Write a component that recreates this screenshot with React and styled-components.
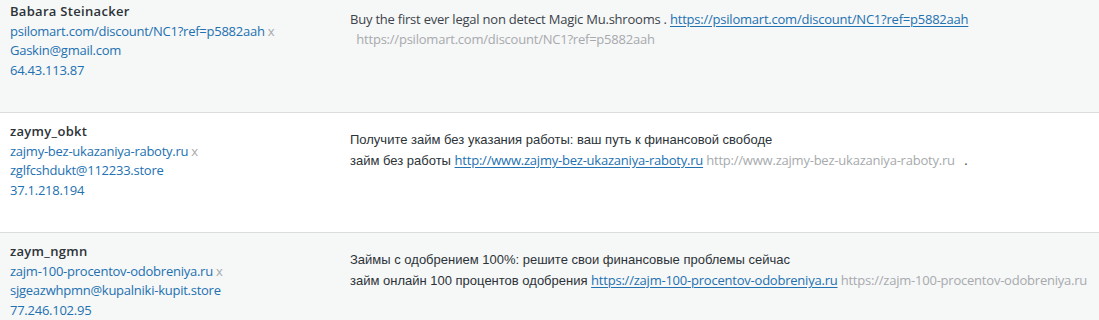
import React from "react";
import styled, { createGlobalStyle } from "styled-components";

const Global = createGlobalStyle`
  html, body { margin: 0; padding: 0; background: #fff; }
  body {
    font-family: "Open Sans", "Noto Sans", sans-serif;
    font-size: 13px;
    color: #3c434a;
    overflow: hidden;
  }
`;

const List = styled.div`
  margin-top: -7px;
  display: flex;
  flex-direction: column;
`;

const Row = styled.div`
  display: grid;
  grid-template-columns: 340px 1fr;
  height: 119px;
  border-bottom: 1px solid #dcdcde;
  background: ${(p) => (p.$striped ? "#f6f7f7" : "#fff")};
`;

const AuthorCell = styled.div`
  padding: 9px 10px 8px;
  display: flex;
  flex-direction: column;
  align-items: flex-start;
  line-height: 19.5px;
  letter-spacing: -0.25px;
`;

const Name = styled.strong`
  font-weight: 600;
  color: #2c3338;
  letter-spacing: 0.3px;
`;

const Link = styled.a`
  color: #2271b1;
  text-decoration: ${(p) => (p.$underline ? "underline" : "none")};
  text-underline-offset: 2px;
`;

const Remove = styled.span`
  color: #a7aaad;
  margin-left: 3px;
`;

const CommentCell = styled.div`
  padding: 16px 10px 8px;
  line-height: 20px;
  letter-spacing: -0.22px;
`;

const Para = styled.p`
  margin: 0;
  white-space: nowrap;
`;

const Ru = styled.span`
  font-family: "Liberation Sans", Arial, sans-serif;
  letter-spacing: 0;
  color: #2c3338;
`;

const Muted = styled.span`
  color: #a7aaad;
`;

const rows = [
  {
    name: "Babara Steinacker",
    url: "psilomart.com/discount/NC1?ref=p5882aah",
    email: "Gaskin@gmail.com",
    ip: "64.43.113.87",
    comment: (
      <>
        <Para>
          Buy the first ever legal non detect Magic Mu.shrooms .{" "}
          <Link $underline href="#">https://psilomart.com/discount/NC1?ref=p5882aah</Link>
        </Para>
        <Para>
          &nbsp;&nbsp;<Muted>https://psilomart.com/discount/NC1?ref=p5882aah</Muted>
        </Para>
      </>
    ),
  },
  {
    name: "zaymy_obkt",
    url: "zajmy-bez-ukazaniya-raboty.ru",
    email: "zglfcshdukt@112233.store",
    ip: "37.1.218.194",
    comment: (
      <>
        <Para>
          <Ru>Получите займ без указания работы: ваш путь к финансовой свободе</Ru>
        </Para>
        <Para>
          <Ru>займ без работы </Ru>
          <Link $underline href="#">http://www.zajmy-bez-ukazaniya-raboty.ru</Link>{" "}
          <Muted>http://www.zajmy-bez-ukazaniya-raboty.ru</Muted>&nbsp;&nbsp;&nbsp;.
        </Para>
      </>
    ),
  },
  {
    name: "zaym_ngmn",
    url: "zajm-100-procentov-odobreniya.ru",
    email: "sjgeazwhpmn@kupalniki-kupit.store",
    ip: "77.246.102.95",
    comment: (
      <>
        <Para>
          <Ru>Займы с одобрением 100%: решите свои финансовые проблемы сейчас</Ru>
        </Para>
        <Para>
          <Ru>займ онлайн 100 процентов одобрения </Ru>
          <Link $underline href="#">https://zajm-100-procentov-odobreniya.ru</Link>{" "}
          <Muted>https://zajm-100-procentov-odobreniya.ru</Muted>
        </Para>
      </>
    ),
  },
];

export default function App() {
  return (
    <>
      <Global />
      <List>
        {rows.map((r, i) => (
          <Row key={i} $striped={i % 2 === 0}>
            <AuthorCell>
              <Name>{r.name}</Name>
              <span>
                <Link href="#">{r.url}</Link>
                <Remove>x</Remove>
              </span>
              <Link href="#">{r.email}</Link>
              <Link href="#">{r.ip}</Link>
            </AuthorCell>
            <CommentCell>{r.comment}</CommentCell>
          </Row>
        ))}
      </List>
    </>
  );
}
